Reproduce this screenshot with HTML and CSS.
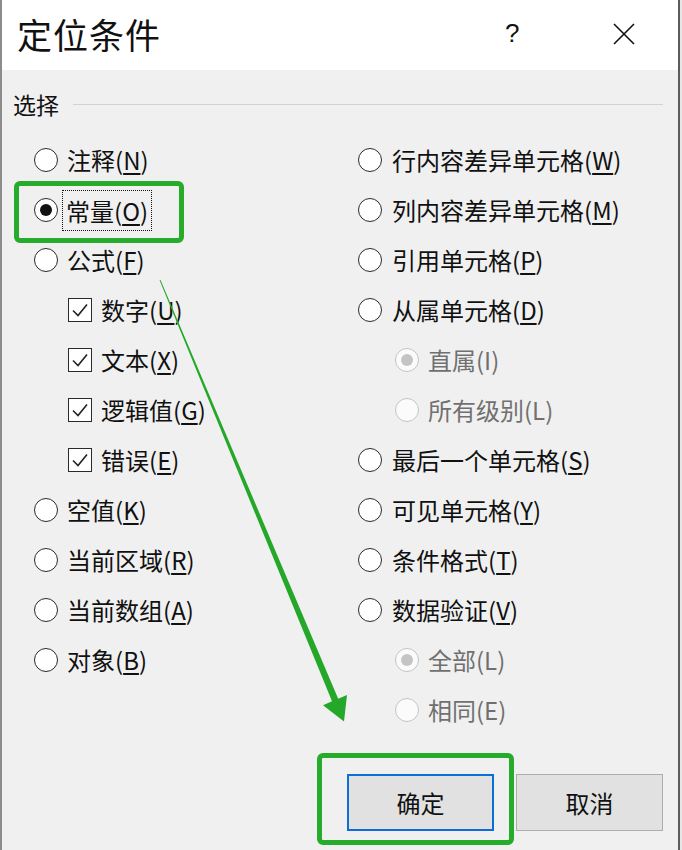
FILE: index.html
```html
<!DOCTYPE html>
<html lang="zh-CN">
<head>
<meta charset="utf-8">
<title>定位条件</title>
<link rel="stylesheet" href="styles.css">
</head>
<body>
<div class="dialog">
  <div class="titlebar">
    <span class="title">定位条件</span>
    <span class="help">?</span>
    <span class="close"><svg width="22" height="22" viewBox="0 0 22 22"><path d="M1 1 L21 21 M21 1 L1 21" stroke="#111" stroke-width="1.6" fill="none"/></svg></span>
  </div>
  <div class="content">
    <div class="group-head"><span class="group-label">选择</span><span class="rule"></span></div>
    <div class="cols">
      <div class="col col-left">
        <div class="row"><span class="radio"></span><span class="label">注释(<u>N</u>)</span></div>
        <div class="row"><span class="radio checked"></span><span class="label focus">常量(<u>O</u>)</span></div>
        <div class="row"><span class="radio"></span><span class="label">公式(<u>F</u>)</span></div>
        <div class="row sub-check"><span class="check"><svg width="20" height="20" viewBox="0 0 20 20"><path d="M3 10.5 L8 15.5 L17 4.5" stroke="#222" stroke-width="1.6" fill="none"/></svg></span><span class="label">数字(<u>U</u>)</span></div>
        <div class="row sub-check"><span class="check"><svg width="20" height="20" viewBox="0 0 20 20"><path d="M3 10.5 L8 15.5 L17 4.5" stroke="#222" stroke-width="1.6" fill="none"/></svg></span><span class="label">文本(<u>X</u>)</span></div>
        <div class="row sub-check"><span class="check"><svg width="20" height="20" viewBox="0 0 20 20"><path d="M3 10.5 L8 15.5 L17 4.5" stroke="#222" stroke-width="1.6" fill="none"/></svg></span><span class="label">逻辑值(<u>G</u>)</span></div>
        <div class="row sub-check"><span class="check"><svg width="20" height="20" viewBox="0 0 20 20"><path d="M3 10.5 L8 15.5 L17 4.5" stroke="#222" stroke-width="1.6" fill="none"/></svg></span><span class="label">错误(<u>E</u>)</span></div>
        <div class="row"><span class="radio"></span><span class="label">空值(<u>K</u>)</span></div>
        <div class="row"><span class="radio"></span><span class="label">当前区域(<u>R</u>)</span></div>
        <div class="row"><span class="radio"></span><span class="label">当前数组(<u>A</u>)</span></div>
        <div class="row"><span class="radio"></span><span class="label">对象(<u>B</u>)</span></div>
      </div>
      <div class="col col-right">
        <div class="row"><span class="radio"></span><span class="label">行内容差异单元格(<u>W</u>)</span></div>
        <div class="row"><span class="radio"></span><span class="label">列内容差异单元格(<u>M</u>)</span></div>
        <div class="row"><span class="radio"></span><span class="label">引用单元格(<u>P</u>)</span></div>
        <div class="row"><span class="radio"></span><span class="label">从属单元格(<u>D</u>)</span></div>
        <div class="row sub-radio disabled"><span class="radio checked"></span><span class="label">直属(I)</span></div>
        <div class="row sub-radio disabled"><span class="radio"></span><span class="label">所有级别(L)</span></div>
        <div class="row"><span class="radio"></span><span class="label">最后一个单元格(<u>S</u>)</span></div>
        <div class="row"><span class="radio"></span><span class="label">可见单元格(<u>Y</u>)</span></div>
        <div class="row"><span class="radio"></span><span class="label">条件格式(<u>T</u>)</span></div>
        <div class="row"><span class="radio"></span><span class="label">数据验证(<u>V</u>)</span></div>
        <div class="row sub-radio disabled"><span class="radio checked"></span><span class="label">全部(L)</span></div>
        <div class="row sub-radio disabled"><span class="radio"></span><span class="label">相同(E)</span></div>
      </div>
    </div>
    <div class="buttons">
      <button class="btn btn-primary">确定</button>
      <button class="btn">取消</button>
    </div>
  </div>
  <div class="hl hl-const"></div>
  <div class="hl hl-ok"></div>
  <svg class="arrow" width="682" height="850" viewBox="0 0 682 850">
    <polygon points="159.6,280.2 160.4,279.8 338.2,698.7 347,695 344,721.5 323,705.2 332,701.3" fill="#25a82a"/>
  </svg>
</div>
</body>
</html>
```
FILE: styles.css
```css
* { box-sizing: border-box; }
html, body { margin: 0; padding: 0; }
body {
  width: 682px;
  height: 850px;
  background: #e6e6e6;
  font-family: "Noto Sans CJK SC", "Noto Sans", sans-serif;
  color: #111;
  overflow: hidden;
}
.dialog {
  position: relative;
  width: 680px;
  height: 850px;
  background: #f0f0f0;
  border-left: 2px solid #8c8c8c;
  border-right: 2px solid #5c5c5c;
  display: flex;
  flex-direction: column;
}
.titlebar {
  height: 70px;
  background: #ffffff;
  display: flex;
  align-items: center;
  padding-left: 15px;
  flex-shrink: 0;
}
.title {
  font-size: 35px;
  line-height: 40px;
  letter-spacing: 1px;
  flex: 1;
  margin-top: -2px;
}
.help {
  font-family: "Liberation Sans", sans-serif;
  font-size: 26px;
  width: 20px;
  margin-right: 88px;
  margin-top: -4px;
}
.close {
  width: 22px;
  height: 22px;
  margin-right: 43px;
  margin-top: -2px;
  display: flex;
}
.content {
  padding: 22px 15px 0 11px;
  display: flex;
  flex-direction: column;
}
.group-head {
  display: flex;
  align-items: center;
  height: 24px;
}
.group-label {
  font-size: 23px;
  line-height: 24px;
}
.rule {
  flex: 1;
  height: 1px;
  background: #d2d2d2;
  margin-left: 14px;
}
.cols {
  display: grid;
  grid-template-columns: 345px 1fr;
  margin-top: 19px;
}
.col-left { padding-left: 21px; }
.row {
  height: 50px;
  display: flex;
  align-items: center;
  font-size: 24px;
}
.label { line-height: 32px; white-space: nowrap; }
.label u {
  text-decoration-thickness: 1.5px;
  text-underline-offset: 3px;
}
.radio {
  width: 24px;
  height: 24px;
  border-radius: 50%;
  border: 1.6px solid #2a2a2a;
  background: #fff;
  margin-right: 9px;
  display: flex;
  align-items: center;
  justify-content: center;
  flex-shrink: 0;
}
.radio.checked::after {
  content: "";
  width: 12px;
  height: 12px;
  border-radius: 50%;
  background: #111;
}
.col-right .radio { margin-right: 10px; }
.check {
  width: 24px;
  height: 24px;
  border: 1.6px solid #2a2a2a;
  background: #fff;
  display: flex;
  align-items: center;
  justify-content: center;
  margin-right: 9px;
  flex-shrink: 0;
}
.sub-check { padding-left: 34px; }
.sub-radio { padding-left: 37px; }
.disabled .label { color: #707070; }
.disabled .radio {
  border-color: #c3c3c3;
  background: #fbfbfb;
  margin-right: 9px;
}
.disabled .radio.checked::after {
  background: #c4c4c4;
  width: 12px;
  height: 12px;
}
.label.focus {
  outline: 1.5px dotted #111;
  outline-offset: 0;
  padding: 3px 3px;
  margin-left: -4px;
  line-height: 33px;
}
.buttons {
  display: flex;
  justify-content: flex-end;
  gap: 22px;
  margin-top: 39px;
}
.btn {
  width: 147px;
  height: 57px;
  background: #e1e1e1;
  border: 1px solid #adadad;
  font-family: "Noto Sans CJK SC", sans-serif;
  font-size: 24px;
  color: #111;
  padding: 0;
}
.btn-primary {
  border: 2.5px solid #0a6fd6;
}
.hl {
  position: absolute;
  border: 5px solid #27ab2b;
  border-radius: 6px;
}
.hl-const {
  left: 12px;
  top: 181px;
  width: 170px;
  height: 62px;
}
.hl-ok {
  left: 315px;
  top: 753px;
  width: 197px;
  height: 92px;
}
.arrow {
  position: absolute;
  left: -2px;
  top: 0;
  pointer-events: none;
}
```
